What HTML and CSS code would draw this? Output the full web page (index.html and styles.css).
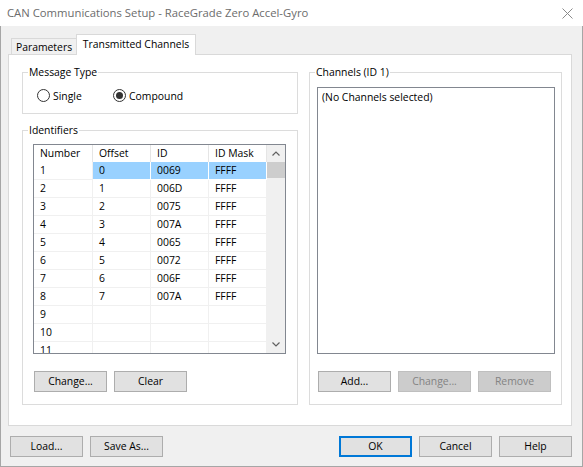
FILE: index.html
```html
<!DOCTYPE html>
<html>
<head>
<meta charset="utf-8">
<link rel="stylesheet" href="styles.css">
</head>
<body>
<div class="window">
  <div class="titlebar">
    <span class="title">CAN Communications Setup - RaceGrade Zero Accel-Gyro</span>
    <svg class="close" width="11" height="11" viewBox="0 0 11 11"><path d="M0.5 0.5 L10.5 10.5 M10.5 0.5 L0.5 10.5" stroke="#8a8a8a" stroke-width="1" fill="none"/></svg>
  </div>
  <div class="client">
    <div class="tabs">
      <div class="tab">Parameters</div>
      <div class="tab active">Transmitted Channels</div>
    </div>
    <div class="panel">
      <div class="col-left">
        <div class="group msg">
          <span class="legend">Message Type</span>
          <div class="radio"><span class="circle"></span>Single</div>
          <div class="radio"><span class="circle on"></span>Compound</div>
        </div>
        <div class="group ids">
          <span class="legend">Identifiers</span>
          <div class="list">
            <div class="grid">
              <div class="hd">Number</div><div class="hd">Offset</div><div class="hd">ID</div><div class="hd">ID Mask</div>
              <div class="c">1</div><div class="c sel">0</div><div class="c sel">0069</div><div class="c sel">FFFF</div>
              <div class="c">2</div><div class="c">1</div><div class="c">006D</div><div class="c">FFFF</div>
              <div class="c">3</div><div class="c">2</div><div class="c">0075</div><div class="c">FFFF</div>
              <div class="c">4</div><div class="c">3</div><div class="c">007A</div><div class="c">FFFF</div>
              <div class="c">5</div><div class="c">4</div><div class="c">0065</div><div class="c">FFFF</div>
              <div class="c">6</div><div class="c">5</div><div class="c">0072</div><div class="c">FFFF</div>
              <div class="c">7</div><div class="c">6</div><div class="c">006F</div><div class="c">FFFF</div>
              <div class="c">8</div><div class="c">7</div><div class="c">007A</div><div class="c">FFFF</div>
              <div class="c">9</div><div class="c"></div><div class="c"></div><div class="c"></div>
              <div class="c">10</div><div class="c"></div><div class="c"></div><div class="c"></div>
              <div class="c">11</div><div class="c"></div><div class="c"></div><div class="c"></div>
            </div>
            <div class="scrollbar">
              <div class="sb-btn"><svg width="8" height="5" viewBox="0 0 8 5"><path d="M0.5 4.5 L4 1 L7.5 4.5" stroke="#606060" stroke-width="1.2" fill="none"/></svg></div>
              <div class="thumb"></div>
              <div class="sb-track"></div>
              <div class="sb-btn"><svg width="8" height="5" viewBox="0 0 8 5"><path d="M0.5 0.5 L4 4 L7.5 0.5" stroke="#606060" stroke-width="1.2" fill="none"/></svg></div>
            </div>
          </div>
          <div class="btnrow">
            <button class="btn">Change...</button>
            <button class="btn">Clear</button>
          </div>
        </div>
      </div>
      <div class="group channels">
        <span class="legend">Channels (ID 1)</span>
        <div class="listbox">(No Channels selected)</div>
        <div class="btnrow">
          <button class="btn">Add...</button>
          <button class="btn disabled">Change...</button>
          <button class="btn disabled">Remove</button>
        </div>
      </div>
    </div>
    <div class="footer">
      <button class="btn">Load...</button>
      <button class="btn">Save As...</button>
      <div class="spacer"></div>
      <button class="btn default">OK</button>
      <button class="btn">Cancel</button>
      <button class="btn">Help</button>
    </div>
  </div>
</div>
</body>
</html>
```
FILE: styles.css
```css
* { box-sizing: border-box; }
html, body { margin: 0; padding: 0; }
body {
  width: 583px;
  height: 467px;
  font-family: "Open Sans", "Noto Sans", sans-serif;
  font-size: 10.4px;
  color: #000;
  background: #f0f0f0;
  overflow: hidden;
}
.window {
  width: 583px;
  height: 467px;
  border: 1px solid #a6a6a6;
  border-top: none;
  display: flex;
  flex-direction: column;
  background: #f0f0f0;
}
.titlebar {
  height: 26px;
  flex: none;
  background: #fff;
  display: flex;
  align-items: center;
  margin: 0 -1px;
  padding-left: 7px;
  padding-right: 10px;
}
.title {
  font-size: 11.3px;
  color: #6c6c6c;
  padding-bottom: 1px;
}
.close { margin-left: auto; }
.client {
  flex: 1;
  display: flex;
  flex-direction: column;
  padding: 8px 10px 9px 7px;
}
.tabs {
  display: flex;
  align-items: flex-end;
  height: 21px;
  padding-left: 3px;
  position: relative;
  z-index: 1;
}
.tab {
  height: 16px;
  width: 66px;
  margin-bottom: 1px;
  border: 1px solid #d9d9d9;
  border-bottom: none;
  background: #f0f0f0;
  display: flex;
  align-items: center;
  justify-content: center;
  white-space: nowrap;
}
.tab.active {
  height: 21px;
  width: 120px;
  margin-bottom: 0;
  margin-left: -1px;
  background: #fff;
  padding-bottom: 3px;
}
.panel {
  margin-top: -1px;
  height: 372px;
  border: 1px solid #d9d9d9;
  background: #fff;
  display: grid;
  grid-template-columns: 276px 253px;
  column-gap: 11px;
  padding: 17px 9px 20px 13px;
  align-items: start;
}
.col-left {
  display: flex;
  flex-direction: column;
  gap: 16px;
}
.group {
  position: relative;
  border: 1px solid #dcdcdc;
}
.legend {
  position: absolute;
  top: -9px;
  left: 5px;
  padding: 0 1px;
  background: #fff;
  line-height: 16px;
  white-space: nowrap;
}
.msg {
  height: 42px;
  display: flex;
  align-items: center;
  padding: 5px 0 0 14px;
}
.radio {
  display: flex;
  align-items: center;
  width: 76px;
  white-space: nowrap;
}
.circle {
  width: 13px;
  height: 13px;
  border: 1px solid #333;
  border-radius: 50%;
  background: #fff;
  margin-right: 3px;
  display: flex;
  align-items: center;
  justify-content: center;
  flex: none;
}
.circle.on::after {
  content: "";
  width: 7px;
  height: 7px;
  border-radius: 50%;
  background: #333;
}
.ids {
  height: 275px;
  padding: 13px 0 0 10px;
}
.list {
  width: 253px;
  height: 210px;
  border: 1px solid #828790;
  display: flex;
  background: #fff;
}
.grid {
  display: grid;
  grid-template-columns: 59px 58px 58px 58px;
  grid-template-rows: 17px;
  grid-auto-rows: 18px;
  height: 208px;
  overflow: hidden;
  align-content: start;
}
.hd, .c {
  padding-left: 6px;
  white-space: nowrap;
  line-height: 17px;
}
.hd {
  border-right: 1px solid #e5e5e5;
}
.c {
  border-right: 1px solid #f0f0f0;
  border-bottom: 1px solid #f0f0f0;
}
.c.sel {
  background: #99d1ff;
  border-right-color: #fff;
  border-bottom-color: #fff;
}
.scrollbar {
  width: 18px;
  background: #f0f0f0;
  display: flex;
  flex-direction: column;
}
.sb-btn {
  height: 17px;
  display: flex;
  align-items: center;
  justify-content: center;
}
.thumb {
  height: 16px;
  background: #cdcdcd;
}
.sb-track { flex: 1; }
.btnrow {
  display: flex;
  gap: 7px;
  margin-top: 17px;
  padding-left: 1px;
}
.btn {
  width: 73px;
  height: 21px;
  border: 1px solid #adadad;
  background: #e1e1e1;
  font-family: inherit;
  font-size: 10.4px;
  color: #000;
  padding: 0 0 1px 0;
  margin: 0;
  flex: none;
}
.btn.disabled {
  background: #cccccc;
  border-color: #bfbfbf;
  color: #838383;
}
.btn.default {
  border: 2px solid #0078d7;
}
.channels {
  height: 333px;
  padding: 14px 0 0 7px;
}
.listbox {
  width: 238px;
  height: 267px;
  border: 1px solid #828790;
  background: #fff;
  padding: 1px 4px;
  line-height: 17px;
}
.footer {
  display: flex;
  gap: 7px;
  margin-top: 10px;
  padding-left: 2px;
}
.spacer { flex: 1; }
```
